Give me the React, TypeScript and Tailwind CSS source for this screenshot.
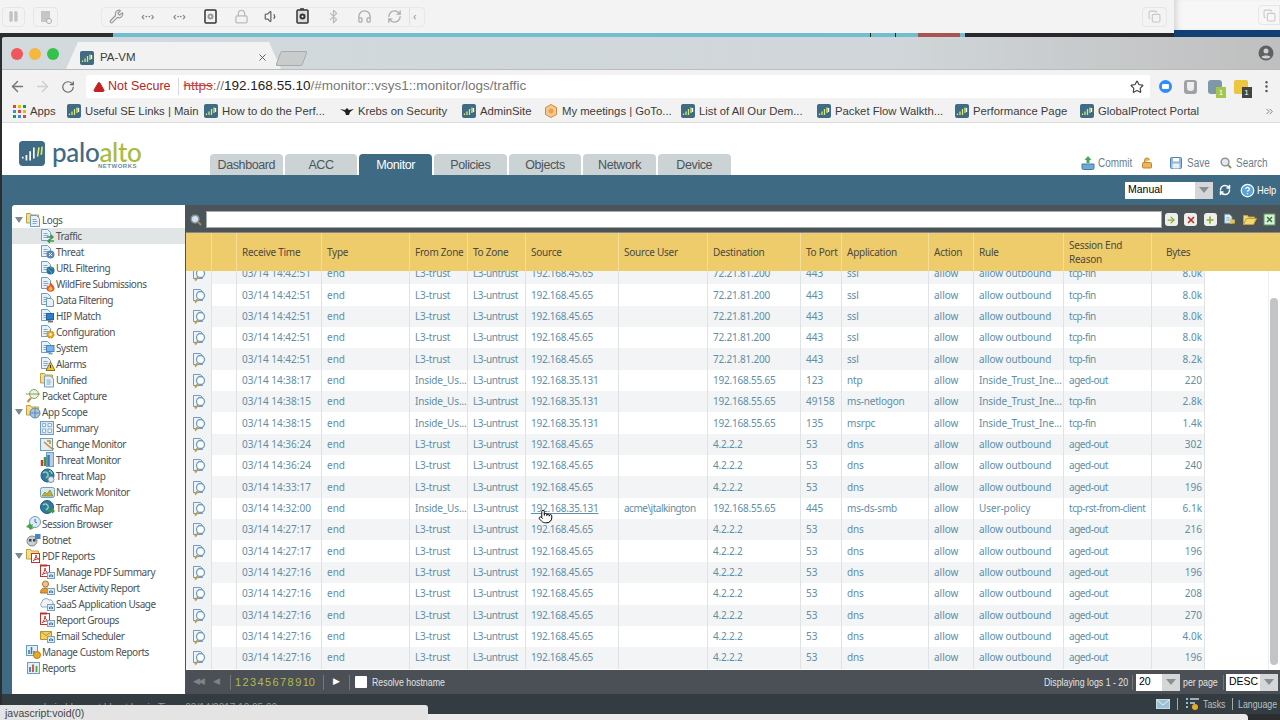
import {
  ArrowLeft,
  ArrowRight,
  RotateCw,
  Star,
  TriangleAlert,
  EllipsisVertical,
  ChevronsRight,
  Wrench,
  Volume1,
  Bluetooth,
  Headphones,
  RefreshCw,
  Lock,
  LockOpen,
  Pause,
  Copy,
  X,
  Plus,
  ArrowRight as GoArrow,
  Pointer,
  CircleHelp,
} from "lucide-react";

const bookmarks = [
  { label: "Useful SE Links | Main", cls: "w-[137px]" },
  { label: "How to do the Perf...", cls: "w-[136px]" },
  { label: "Krebs on Security", cls: "w-[122px]", krebs: true },
  { label: "AdminSite", cls: "w-[82px]" },
  { label: "My meetings | GoTo...", cls: "w-[137px]", meet: true },
  { label: "List of All Our Dem...", cls: "w-[136px]" },
  { label: "Packet Flow Walkth...", cls: "w-[138px]" },
  { label: "Performance Page", cls: "w-[125px]" },
  { label: "GlobalProtect Portal", cls: "w-[150px]" },
];

const tabs = ["Dashboard", "ACC", "Monitor", "Policies", "Objects", "Network", "Device"];

type Node = { label: string; level: 0 | 1; kind: string; open?: boolean; selected?: boolean };

const tree: Node[] = [
  { label: "Logs", level: 0, kind: "folder", open: true },
  { label: "Traffic", level: 1, kind: "traffic", selected: true },
  { label: "Threat", level: 1, kind: "threat" },
  { label: "URL Filtering", level: 1, kind: "url" },
  { label: "WildFire Submissions", level: 1, kind: "fire" },
  { label: "Data Filtering", level: 1, kind: "data" },
  { label: "HIP Match", level: 1, kind: "hip" },
  { label: "Configuration", level: 1, kind: "config" },
  { label: "System", level: 1, kind: "system" },
  { label: "Alarms", level: 1, kind: "alarm" },
  { label: "Unified", level: 1, kind: "unified" },
  { label: "Packet Capture", level: 0, kind: "capture" },
  { label: "App Scope", level: 0, kind: "scope", open: true },
  { label: "Summary", level: 1, kind: "summary" },
  { label: "Change Monitor", level: 1, kind: "change" },
  { label: "Threat Monitor", level: 1, kind: "tmon" },
  { label: "Threat Map", level: 1, kind: "globe" },
  { label: "Network Monitor", level: 1, kind: "net" },
  { label: "Traffic Map", level: 1, kind: "globe2" },
  { label: "Session Browser", level: 0, kind: "session" },
  { label: "Botnet", level: 0, kind: "botnet" },
  { label: "PDF Reports", level: 0, kind: "pdffolder", open: true },
  { label: "Manage PDF Summary", level: 1, kind: "pdf" },
  { label: "User Activity Report", level: 1, kind: "user" },
  { label: "SaaS Application Usage", level: 1, kind: "cloud" },
  { label: "Report Groups", level: 1, kind: "pdf" },
  { label: "Email Scheduler", level: 1, kind: "mail" },
  { label: "Manage Custom Reports", level: 0, kind: "custom" },
  { label: "Reports", level: 0, kind: "reports" },
];

function Page() {
  return (
    <>
      <path d="M1.5 1.5h6l3 3v8h-9z" fill="#e8f1f8" stroke="#6f9dbd" />
      <path d="M3.5 5.5h4M3.5 7.5h5M3.5 9.5h4" stroke="#86aac4" />
    </>
  );
}

function Folder() {
  return <path d="M0.5 3.5v-2h4l1 1.5h7v8h-12z" fill="#f6dc8a" stroke="#c2a03f" />;
}

function MiniChart() {
  return (
    <>
      <rect x="7.5" y="8.5" width="7" height="6" fill="#dbe8f2" stroke="#7ba2bd" />
      <path d="M9.5 13v-2M11 13v-3M12.5 13v-2" stroke="#3b78a8" />
    </>
  );
}

// magnifier with a pale lens, used in the top bar and the filter bar
function Glass({ lens, size }: { lens: string; size: number }) {
  return (
    <svg width={size} height={size} viewBox="0 0 13 13" className="shrink-0">
      <circle cx="5.5" cy="5.5" r="4.2" fill={lens} stroke="#8b9499" strokeWidth="1.6" />
      <path d="M8.5 8.5l3.500 3.500" stroke="#a08a63" strokeWidth="2.2" />
    </svg>
  );
}

function TreeIcon({ kind }: { kind: string }) {
  const inner = () => {
    switch (kind) {
      case "folder":
        return (<><Folder /><g transform="translate(3 2)"><Page /></g></>);
      case "traffic":
        return (<><Page /><path d="M7 9h6M11 7l2 2-2 2M14 13H8M10 11l-2 2 2 2" stroke="#3e9a3e" strokeWidth="1.4" fill="none" /></>);
      case "threat":
        return (<><Page /><circle cx="10.5" cy="10.5" r="4" fill="#5d86b5" /><path d="M9 9l3 3M12 9l-3 3" stroke="#fff" /></>);
      case "url":
        return (<><Page /><circle cx="10.5" cy="10.5" r="4" fill="#2a6fa8" /><path d="M8 9.5c2 0 1 2 3 2 1 0 1 2 0 2.500M10 7c1 1 2 1 3 1" stroke="#5cb35c" fill="none" /></>);
      case "fire":
        return (<><Page /><path d="M10.500 6c1 2 4 3.500 4 6.500a3.800 3 0 0 1-8 0c0-1.500 1-2 1.500-3 .5.500.5 1 1 1 .5-1.500.5-3 1.500-4.500z" fill="#e5572b" /><path d="M10.500 10c.5 1 2 1.500 2 3a2 1.500 0 0 1-4 0c0-1 1.500-1.500 2-3z" fill="#f6c23f" /></>);
      case "data":
        return (<><Page /><g transform="translate(5 5)"><path d="M1.500 1.500h5l2 2v6h-7z" fill="#e8f1f8" stroke="#6f9dbd" /></g></>);
      case "hip":
        return (<><Page /><rect x="6.500" y="5.500" width="7" height="6" fill="#2b7fd0" stroke="#215f9b" /><path d="M8 13.500h5" stroke="#777" strokeWidth="2" /></>);
      case "config":
        return (<><Page /><circle cx="10.500" cy="10.500" r="3.500" fill="#eaaa24" stroke="#b77d12" strokeDasharray="2 1" /><circle cx="10.500" cy="10.500" r="1.200" fill="#fff" /></>);
      case "system":
        return (<><Page /><rect x="6.500" y="5.500" width="7.500" height="6" fill="#73b5ea" stroke="#4a86bb" /><path d="M8.500 13.500h4" stroke="#7aa4c4" strokeWidth="2" /></>);
      case "alarm":
        return (<><Page /><path d="M10.500 6l4.500 8.500H6z" fill="#eec332" stroke="#8c7320" /><path d="M10.500 9v3" stroke="#333" /></>);
      case "unified":
        return (<><Folder /><g transform="translate(3 2.500)"><Page /></g></>);
      case "capture":
        return (<><circle cx="8" cy="6" r="4.500" fill="#eef3df" stroke="#7fa163" /><path d="M0 6h14" stroke="#7fa163" /><path d="M5 10l-3.500 4" stroke="#c2913f" strokeWidth="2" /></>);
      case "scope":
        return (<><Folder /><circle cx="9" cy="9" r="5" fill="#a9c6e1" stroke="#6189ad" /><path d="M4 9h10M9 4v10" stroke="#6189ad" /></>);
      case "summary":
        return (<><rect x="0.500" y="1.500" width="13" height="13" fill="#d7e7f4" stroke="#6f9dbd" /><path d="M2.500 3.500h3v3h-3zM8 3.500h3.500v3H8zM2.500 9h3v3.500h-3zM8 9h3.500v3.500H8z" fill="#f1f7fb" stroke="#8db2cc" /></>);
      case "change":
        return (<><rect x="0.500" y="2.500" width="12" height="12" fill="#e3edf5" stroke="#6f9dbd" /><path d="M4 6l7 6M7 5h3v3M11 12l3 1" stroke="#c98f23" strokeWidth="1.500" fill="none" /></>);
      case "tmon":
        return (<><rect x="6.500" y="0.500" width="7" height="14" fill="#b7cfe3" stroke="#6f9dbd" /><path d="M2 14V8" stroke="#cc3b32" strokeWidth="2.500" /><path d="M5 14V5" stroke="#3b9a48" strokeWidth="2.500" /><path d="M8.500 14V3" stroke="#3e75b4" strokeWidth="2.500" /></>);
      case "globe":
        return (<><circle cx="7.500" cy="7.500" r="6.500" fill="#2f79a8" stroke="#1e5c85" /><path d="M3 5c2-2 4-1 5 1s-1 3-2 4M9 3c2 0 3 2 3 3" stroke="#9ed18a" strokeWidth="1.500" fill="none" /><circle cx="11" cy="11.500" r="3" fill="#dde9f2" stroke="#6d92ad" /></>);
      case "globe2":
        return (<><circle cx="7" cy="7" r="6.500" fill="#2f79a8" stroke="#1e5c85" /><path d="M3 5c2-2 4-1 5 1s-1 3-2 4" stroke="#9ed18a" strokeWidth="1.500" fill="none" /><path d="M8 11h6M12 9l2 2-2 2" stroke="#3e9a3e" strokeWidth="1.500" fill="none" /></>);
      case "net":
        return (<><rect x="0.500" y="3.500" width="14" height="10" rx="2" fill="#dbe8f1" stroke="#6f9dbd" /><path d="M2 12l3-4 2 2 3-4 3 6z" fill="#c9a83c" stroke="#7fa14b" /></>);
      case "session":
        return (<><circle cx="9" cy="6" r="5.500" fill="#dbeaf6" stroke="#6f9dbd" /><path d="M9 3v3l2 1" stroke="#3b6f95" fill="none" /><path d="M0 11l4-4 1 2 2-1-1 3 2 1-4 2-1-2z" fill="#4aa54a" /></>);
      case "botnet":
        return (<><circle cx="6" cy="9" r="5" fill="#c9cfd3" stroke="#7b848a" /><rect x="3" y="7" width="2.500" height="2.500" fill="#444" /><rect x="7" y="7" width="2.500" height="2.500" fill="#444" /><rect x="9" y="2" width="5.500" height="5" fill="#3f87c6" /></>);
      case "pdffolder":
        return (<><Folder /><rect x="5.500" y="5.500" width="8" height="9" fill="#fff" stroke="#b8342c" /><path d="M7 13c2-2 3-4 3-6 0 3 2 4 3 4-2 0-4 0-6 2z" stroke="#c9332b" fill="none" /></>);
      case "pdf":
        return (<><rect x="0.500" y="1.500" width="9" height="11" fill="#fff" stroke="#b8342c" /><path d="M0 1.500h7" stroke="#b8342c" strokeWidth="2" /><path d="M2 11c2-2 3-5 3-7 0 3 2 5 4 5-3 0-5 0-7 2z" stroke="#c9332b" fill="none" /><MiniChart /></>);
      case "user":
        return (<><circle cx="5.500" cy="4" r="3" fill="#f1c38e" stroke="#a9742f" /><path d="M0.500 13c0-4 2-5 5-5s4 1 4 2v3z" fill="#e39b2e" stroke="#a9742f" /><MiniChart /></>);
      case "cloud":
        return (<><path d="M2 11a3 3 0 0 1 0-5 4 4 0 0 1 7-2 3 3 0 0 1 4 3v2H8v2z" fill="#edf3f8" stroke="#8fa9bd" /><MiniChart /></>);
      case "mail":
        return (<><path d="M0.500 3.500h11v8h-11z" fill="#f3ce5f" stroke="#b8942e" /><path d="M0.500 3.500l5.500 4 5.500-4" stroke="#b8942e" fill="none" /><MiniChart /></>);
      case "custom":
        return (<><rect x="0.500" y="1.500" width="11" height="10" fill="#e3edf5" stroke="#6f9dbd" /><path d="M3 10V6M5.500 10V3M8 10V7" stroke="#3b78a8" strokeWidth="1.500" /><circle cx="11" cy="11" r="3.500" fill="#eaaa24" stroke="#b77d12" /></>);
      case "reports":
        return (<><rect x="1.500" y="2.500" width="12" height="11" fill="#e3edf5" stroke="#6f9dbd" /><path d="M4 12V7" stroke="#3b78a8" strokeWidth="1.700" /><path d="M7 12V4.500" stroke="#c9423a" strokeWidth="1.700" /><path d="M10.500 12V6" stroke="#4aa54a" strokeWidth="1.700" /></>);
      default:
        return <Page />;
    }
  };
  return (
    <svg width="15" height="16" viewBox="0 0 15 16" className="shrink-0">
      {inner()}
    </svg>
  );
}

function Sidebar() {
  return (
    <div className="w-[173px] shrink-0 bg-white pt-[7px] rounded-tl-[3px] overflow-hidden">
      {tree.map((n) => (
        <div
          key={n.label + n.kind}
          className={
            "h-4 flex items-center text-[10px] tracking-[-0.45px] text-[#4b5257] " +
            (n.selected ? "bg-[#e2e5e6] " : "") +
            (n.level === 0 ? "pl-[3px]" : "pl-[17px]")
          }
        >
          <span className="w-[11px] shrink-0 flex">
            {n.open && <span className="w-0 h-0 border-x-[4px] border-x-transparent border-t-[6px] border-t-[#7c8a92]" />}
          </span>
          <TreeIcon kind={n.kind} />
          <span className="ml-[1px] whitespace-nowrap">{n.label}</span>
        </div>
      ))}
    </div>
  );
}

function RowIcon() {
  return (
    <svg width="15" height="16" viewBox="0 0 15 16">
      <path d="M1.500 1.500h7l2 2v9h-9z" fill="#eef4f9" stroke="#6f9dbd" />
      <circle cx="8.500" cy="7.500" r="4" fill="#fff" stroke="#6f9dbd" strokeWidth="1.300" />
      <path d="M6 11l-3 3.500" stroke="#c8994a" strokeWidth="2" />
    </svg>
  );
}

type Log = {
  time: string;
  from: string;
  src: string;
  user?: string;
  dst: string;
  port: string;
  app: string;
  rule: string;
  end: string;
  bytes: string;
  link?: boolean;
};

const web = (bytes: string): Log => ({
  time: "03/14 14:42:51",
  from: "L3-trust",
  src: "192.168.45.65",
  dst: "72.21.81.200",
  port: "443",
  app: "ssl",
  rule: "allow outbound",
  end: "tcp-fin",
  bytes,
});
const inside = (time: string, port: string, app: string, end: string, bytes: string): Log => ({
  time,
  from: "Inside_Us...",
  src: "192.168.35.131",
  dst: "192.168.55.65",
  port,
  app,
  rule: "Inside_Trust_Ine...",
  end,
  bytes,
});
const dns = (time: string, bytes: string): Log => ({
  time,
  from: "L3-trust",
  src: "192.168.45.65",
  dst: "4.2.2.2",
  port: "53",
  app: "dns",
  rule: "allow outbound",
  end: "aged-out",
  bytes,
});

const logs: Log[] = [
  web("8.0k"),
  web("8.0k"),
  web("8.0k"),
  web("8.0k"),
  web("8.2k"),
  inside("03/14 14:38:17", "123", "ntp", "aged-out", "220"),
  inside("03/14 14:38:15", "49158", "ms-netlogon", "tcp-fin", "2.8k"),
  inside("03/14 14:38:15", "135", "msrpc", "tcp-fin", "1.4k"),
  dns("03/14 14:36:24", "302"),
  dns("03/14 14:36:24", "240"),
  dns("03/14 14:33:17", "196"),
  {
    ...inside("03/14 14:32:00", "445", "ms-ds-smb", "tcp-rst-from-client", "6.1k"),
    user: "acme\\jtalkington",
    rule: "User-policy",
    link: true,
  },
  dns("03/14 14:27:17", "216"),
  dns("03/14 14:27:17", "196"),
  dns("03/14 14:27:16", "196"),
  dns("03/14 14:27:16", "208"),
  dns("03/14 14:27:16", "270"),
  dns("03/14 14:27:16", "4.0k"),
  dns("03/14 14:27:16", "196"),
];

const headers = [
  "",
  "",
  "Receive Time",
  "Type",
  "From Zone",
  "To Zone",
  "Source",
  "Source User",
  "Destination",
  "To Port",
  "Application",
  "Action",
  "Rule",
  "Session End Reason",
  "Bytes",
];

function Cell({ children, cls = "" }: { children?: React.ReactNode; cls?: string }) {
  return (
    <div className={"border-r border-[#dfe3e5] pl-[5px] pr-[2px] flex items-center whitespace-nowrap overflow-hidden " + cls}>
      {children}
    </div>
  );
}

function LogTable() {
  return (
    <div className="flex-1 min-h-0 relative bg-white overflow-hidden">
      <div className="mt-[-8px]">
        {logs.map((l, i) => (
          <div
            key={i}
            className={
              "grid grid-cols-[26px_25px_85px_88px_58px_58px_93px_89px_93px_41px_87px_45px_90px_88px_53px] w-[1019px] h-[21.35px] text-[10px] text-[#5f8ea6] " +
              (i % 2 === 0 ? "bg-[#f2f4f5]" : "bg-white")
            }
          >
            <div className="bg-[#f1f3f4] border-r border-[#dfe3e5] flex items-center pl-[6px] pt-[1px]">
              <RowIcon />
            </div>
            <Cell />
            <Cell>{l.time}</Cell>
            <Cell>end</Cell>
            <Cell cls="tracking-[-0.15px]">{l.from}</Cell>
            <Cell cls="tracking-[-0.4px]">L3-untrust</Cell>
            <Cell cls="tracking-[-0.25px]">{l.link ? <span className="underline">{l.src}</span> : l.src}</Cell>
            <Cell cls="tracking-[-0.5px]">{l.user}</Cell>
            <Cell cls="tracking-[-0.2px]">{l.dst}</Cell>
            <Cell>{l.port}</Cell>
            <Cell cls="tracking-[-0.2px]">{l.app}</Cell>
            <Cell>allow</Cell>
            <Cell cls="tracking-[-0.1px]">{l.rule}</Cell>
            <Cell cls="tracking-[-0.45px]">{l.end}</Cell>
            <Cell cls="justify-end">{l.bytes}</Cell>
          </div>
        ))}
      </div>
      {/* scrollbar */}
      <div className="absolute top-0 bottom-0 right-[11px] w-px bg-[#eceeef]" />
      <div className="absolute top-[27px] bottom-[5px] right-[2px] w-[8px] rounded-full bg-[#c2c4c5]" />
      <Pointer size={15} className="absolute left-[352px] top-[238px] text-black fill-white" strokeWidth={1.5} />
    </div>
  );
}

function Favicon() {
  return (
    <svg width="14" height="14" viewBox="0 0 14 14" className="shrink-0">
      <rect width="14" height="14" rx="2" fill="#3f6b85" />
      <path d="M2.500 11V9.500M5 11V7.500M7.500 11V5M10 9V3.500" stroke="#d9e86a" strokeWidth="1.300" />
      <path d="M11.500 8V4" stroke="#fff" strokeWidth="1.300" />
    </svg>
  );
}

function DiskIcon({ dark }: { dark?: boolean }) {
  return (
    <svg width="15" height="17" viewBox="0 0 15 17" className="shrink-0">
      <rect x="2" y="2" width="11" height="13" rx="1" fill={dark ? "#dcdcdc" : "#f2f2f2"} stroke="#333" strokeWidth="1.500" />
      <circle cx="7.500" cy="8.500" r="3" fill={dark ? "#333" : "#999"} />
      <circle cx="7.500" cy="8.500" r="1" fill="#fff" />
      {dark && <path d="M5 1h4" stroke="#333" strokeWidth="1.500" />}
    </svg>
  );
}

function VmBar() {
  return (
    <div className="h-[33px] flex">
      <div className="w-[1174px] bg-[#f3f3f3] flex items-center pl-[2px] pr-[7px]">
        <div className="w-[23px] h-5 border border-[#e6e6e6] rounded flex items-center justify-center">
          <Pause size={13} className="text-[#c4c4c4] fill-[#c4c4c4]" strokeWidth={1} />
        </div>
        <div className="ml-[8px] w-[25px] h-5 border border-[#e6e6e6] rounded flex items-center justify-center">
          <svg width="12" height="14" viewBox="0 0 12 14"><rect x="1" y="1" width="9" height="11" fill="#c6c6c6" /><circle cx="9" cy="11" r="2.500" fill="#f3f3f3" stroke="#aaa" /></svg>
        </div>
        <div className="ml-[43px] w-[324px] h-5 border border-[#e8e8e8] rounded flex items-center gap-[15.7px] pl-[7px] text-[11px] text-[#666]">
          <Wrench size={15} className="text-[#999] shrink-0" />
          <span className="w-4 text-center">‹··›</span>
          <span className="w-4 text-center">‹··›</span>
          <DiskIcon />
          <Lock size={15} className="text-[#bbb] shrink-0" />
          <Volume1 size={15} className="text-[#666] shrink-0" />
          <DiskIcon dark />
          <Bluetooth size={15} className="text-[#bbb] shrink-0" />
          <Headphones size={15} className="text-[#aaa] shrink-0" />
          <RefreshCw size={15} className="text-[#aaa] shrink-0" />
          <span className="text-[#999] border-l border-[#e0e0e0] pl-[3px] -ml-[9px]">‹</span>
        </div>
        <div className="ml-auto w-[25px] h-5 border border-[#e6e6e6] rounded flex items-center justify-center">
          <Copy size={13} className="text-[#c8c8c8]" />
        </div>
      </div>
      <div className="flex-1 bg-[#f7f7f7] border-b-[3px] border-[#123f74] flex items-start justify-end pt-[5px] shadow-[inset_6px_0_6px_-4px_#cfcfcf]">
        <div className="w-[22px] h-5 border border-[#e6e6e6] rounded-l flex items-center justify-center">
          <Copy size={13} className="text-[#c8c8c8]" />
        </div>
      </div>
    </div>
  );
}

function Stripe() {
  return (
    <div className="h-[4px] flex">
      <div className="w-[113px] bg-[#2b2d2f]" />
      <div className="w-[757px] bg-[#73bdd0]" />
      <div className="w-px bg-[#222]" />
      <div className="w-[24px] bg-[#73bdd0]" />
      <div className="w-px bg-[#222]" />
      <div className="w-[22px] bg-[#73bdd0]" />
      <div className="w-[42px] bg-[#a95450]" />
      <div className="w-[5px] bg-[#73bdd0]" />
      <div className="w-[209px] bg-[#29292b]" />
      <div className="flex-1 bg-[#123f74]" />
    </div>
  );
}

function Chrome() {
  return (
    <div className="font-['Liberation_Sans',sans-serif] text-[#3c3c3c]">
      <div className="h-[33px] bg-gradient-to-r from-[#d2dadd] via-[#d0d6d9] via-[70%] to-[#bfbfbf] flex items-end pl-[66px] border-b border-[#b9bcbe] rounded-tl-[5px] relative">
        <div className="absolute left-[11px] top-[11px] flex gap-[6px]">
          <span className="w-[12px] h-[12px] rounded-full bg-[#f0565a]" />
          <span className="w-[12px] h-[12px] rounded-full bg-[#f5b73e]" />
          <span className="w-[12px] h-[12px] rounded-full bg-[#35c24a]" />
        </div>
        <div className="w-[215px] h-[27px] bg-[#f2f2f2] [clip-path:polygon(0_100%,12px_0,calc(100%-12px)_0,100%_100%)] flex items-center pl-[14px] pr-[13px] pt-[4px] text-[11.5px]">
          <Favicon />
          <span className="ml-[6px]">PA-VM</span>
          <X size={11} className="ml-auto text-[#555]" />
        </div>
        <div className="ml-[-3px] mb-[3px] w-[27px] h-[15px] bg-[#c9cccd] border border-[#aaa] -skew-x-[20deg] rounded-[2px]" />
        <svg width="18" height="18" viewBox="0 0 18 18" className="ml-auto mr-[5px] mb-[7px]">
          <circle cx="9" cy="9" r="7.500" fill="#5e6163" />
          <circle cx="9" cy="7" r="2.500" fill="#d0d0d0" />
          <path d="M4.500 13c1-2 8-2 9 0-2 2-7 2-9 0z" fill="#d0d0d0" />
        </svg>
      </div>
      <div className="h-[28px] bg-[#f2f2f2] flex items-center pl-[9px] pr-[7px] pt-[5px]">
        <ArrowLeft size={17} className="text-[#757575]" />
        <ArrowRight size={17} className="text-[#cfcfcf] ml-[8px]" />
        <RotateCw size={14} className="text-[#666] ml-[10px]" />
        <div className="ml-[11px] w-[1064px] h-[23px] bg-white rounded-[2px] flex items-center pl-[7px] pr-[6px] text-[13.5px]">
          <TriangleAlert size={12} className="text-[#c5221f] fill-[#c5221f] stroke-[#c5221f]" />
          <span className="ml-[3px] text-[12.5px] text-[#b3261e]">Not Secure</span>
          <span className="ml-[7px] mr-[5px] w-px h-[17px] bg-[#d8d8d8]" />
          <span className="text-[#c5413b] line-through">https</span>
          <span className="text-[#777]">://</span>
          <span className="text-[#222]">192.168.55.10</span>
          <span className="text-[#777]">/#monitor::vsys1::monitor/logs/traffic</span>
          <Star size={14} className="ml-auto text-[#444]" />
        </div>
        <div className="ml-[9px] flex-1 flex items-center justify-between">
          <span className="w-[13px] h-[13px] rounded-full bg-[#2d8cff] flex items-center justify-center">
            <span className="w-[7px] h-[5px] rounded-[1px] bg-white" />
          </span>
          <span className="w-[13px] h-[14px] rounded-[3px] bg-[#9ea3a5] flex items-center justify-center">
            <span className="w-[7px] h-[9px] rounded-b-[4px] bg-[#eeeeee]" />
          </span>
          <span className="relative w-[14px] h-[14px] rounded-[3px] bg-[#7f98a7]">
            <span className="absolute right-[-4px] bottom-[-4px] w-[10px] h-[11px] bg-[#a4c64a] text-white text-[8px] leading-[11px] text-center">1</span>
          </span>
          <span className="relative w-[14px] h-[14px] rounded-[2px] bg-[#ecc73e]">
            <span className="absolute right-[-4px] bottom-[-4px] w-[10px] h-[11px] bg-[#444] text-white text-[8px] leading-[11px] text-center">1</span>
          </span>
          <EllipsisVertical size={15} className="text-[#555] -mr-[1px]" />
        </div>
      </div>
      <div className="h-[25px] bg-[#f2f2f2] border-b border-[#dcdcdc] flex items-center pl-[13px] pr-[5px] pt-[2px] text-[11.3px]">
        <svg width="13" height="13" viewBox="0 0 13 13" className="shrink-0">
          <rect x="0" y="0" width="3" height="3" fill="#dc4437" />
          <rect x="5" y="0" width="3" height="3" fill="#f4b400" />
          <rect x="10" y="0" width="3" height="3" fill="#0f9d58" />
          <rect x="0" y="5" width="3" height="3" fill="#4285f4" />
          <rect x="5" y="5" width="3" height="3" fill="#dc4437" />
          <rect x="10" y="5" width="3" height="3" fill="#f4b400" />
          <rect x="0" y="10" width="3" height="3" fill="#0f9d58" />
          <rect x="5" y="10" width="3" height="3" fill="#4285f4" />
          <rect x="10" y="10" width="3" height="3" fill="#dc4437" />
        </svg>
        <span className="ml-[4px] w-[37px]">Apps</span>
        {bookmarks.map((b) => (
          <div key={b.label} className={b.cls + " flex items-center gap-[4px] whitespace-nowrap"}>
            {b.krebs ? (
              <svg width="14" height="10" viewBox="0 0 14 10" className="shrink-0">
                <path d="M0 3l5 1 2-2 2 2 5-1-4 3-1 3H6L5 6z" fill="#222" />
              </svg>
            ) : b.meet ? (
              <svg width="14" height="14" viewBox="0 0 14 14" className="shrink-0">
                <path d="M7 .5l5.500 3v7L7 13.500l-5.500-3v-7z" fill="#f3c98f" stroke="#cf8b3e" />
                <circle cx="7" cy="7" r="2.500" fill="#e8a24a" />
              </svg>
            ) : (
              <Favicon />
            )}
            <span>{b.label}</span>
          </div>
        ))}
        <ChevronsRight size={11} className="ml-auto text-[#777]" />
      </div>
    </div>
  );
}

function Logo() {
  return (
    <div className="w-[191px] shrink-0 self-start mt-[18px] flex items-start relative">
      <svg width="26" height="25" viewBox="0 0 28 27" className="shrink-0">
        <rect width="28" height="27" rx="4" fill="#3f6b85" />
        <path d="M4 19v-2M8 21v-6M12 21V11M16 19V7" stroke="#fff" strokeWidth="1.800" />
        <path d="M20 17l1.500-10M24 15l1-9" stroke="#d9e86a" strokeWidth="1.800" />
      </svg>
      <span className="ml-[7px] text-[26px] leading-[22px] tracking-[-0.3px] font-medium font-['Lato','Liberation_Sans',sans-serif]">
        <span className="text-[#3f6b85]">palo</span>
        <span className="text-[#a9bb3c]">alto</span>
      </span>
      <span className="absolute left-[79px] top-[22px] text-[6px] leading-[7px] font-bold tracking-[0.5px] text-[#6d8a9b] font-['Liberation_Sans',sans-serif]">
        NETWORKS
      </span>
    </div>
  );
}

function Header() {
  const scaled = "inline-block whitespace-nowrap scale-x-[0.83] origin-left";
  return (
    <div className="h-[52px] bg-white flex items-end pl-[19px] pr-[13px] font-['Liberation_Sans',sans-serif]">
      <Logo />
      <div className="flex gap-[2px]">
        {tabs.map((t) => (
          <div
            key={t}
            className={
              "w-[72.67px] h-[21px] pt-[2px] rounded-t-[4px] flex items-center justify-center text-[12.5px] tracking-[-0.4px] " +
              (t === "Monitor" ? "bg-[#3e6a83] text-white" : "bg-[#cbd3d5] text-[#4c5559]")
            }
          >
            {t}
          </div>
        ))}
      </div>
      <div className="ml-auto mb-[3px] flex items-center text-[12px] text-[#6a7f8c]">
        <svg width="14" height="14" viewBox="0 0 14 14" className="shrink-0">
          <path d="M7 0l3.500 4H8.500v3h-3V4H3.500z" fill="#4aa65a" />
          <path d="M1 8h12v4a1.500 1.500 0 0 1-1.500 1.500h-9A1.500 1.500 0 0 1 1 12z" fill="#6fa9cf" stroke="#3f7ba3" />
        </svg>
        <span className={"ml-[3px] w-[35px] " + scaled}>Commit</span>
        <LockOpen size={12} className="ml-[8px] shrink-0 text-[#c9832a] fill-[#eab65a]" />
        <svg width="12" height="12" viewBox="0 0 12 12" className="ml-[17px] shrink-0">
          <rect x="0.500" y="0.500" width="11" height="11" rx="1" fill="#8db8d8" stroke="#4f86b4" />
          <rect x="3" y="1" width="6" height="3.500" fill="#fff" />
          <rect x="2.500" y="6.500" width="7" height="5" fill="#e8f0f6" />
        </svg>
        <span className={"ml-[5px] w-[21px] " + scaled}>Save</span>
        <span className="ml-[12px] shrink-0">
          <Glass lens="#e6e9eb" size={12} />
        </span>
        <span className={"ml-[4px] w-[31px] " + scaled}>Search</span>
      </div>
    </div>
  );
}

function SelectBox({ text, cls }: { text: string; cls: string }) {
  return (
    <div className={cls + " h-[17px] shrink-0 flex bg-white text-black text-[10.5px]"}>
      <span className="flex-1 pl-[3px] flex items-center">{text}</span>
      <span className="w-[18px] bg-[#d4d6d7] flex items-center justify-center">
        <span className="w-0 h-0 border-x-[5px] border-x-transparent border-t-[6px] border-t-[#8b8f92]" />
      </span>
    </div>
  );
}

function Toolbar() {
  return (
    <div className="h-[30px] bg-[#3e6a83] flex items-center justify-end pr-[5px] font-['Liberation_Sans',sans-serif]">
      <SelectBox text="Manual" cls="w-[88px]" />
      <RefreshCw size={12} className="ml-[6px] text-white" strokeWidth={3} />
      <CircleHelp size={15} className="ml-[9px] text-white fill-[#5aa4d6]" />
      <span className="ml-[2px] w-[18px] text-white text-[11px] scale-x-[0.85] origin-left">Help</span>
    </div>
  );
}

function FilterBar() {
  const btn = "w-[13px] h-[13px] rounded-[3px] bg-[#eeeeee] flex items-center justify-center";
  return (
    <div className="h-[28px] bg-[#4a5459] flex items-center pl-[4px] pr-[4px] pt-[2px] border-b border-[#888]">
      <Glass lens="#cfe2ef" size={12} />
      <div className="ml-[4px] w-[956px] h-[17px] bg-white border border-[#aaa]" />
      <div className="ml-auto flex items-center gap-[6.5px]">
        <span className={btn}><GoArrow size={10} className="text-[#8eaa2d]" strokeWidth={3} /></span>
        <span className={btn}><X size={10} className="text-[#b5342a]" strokeWidth={4} /></span>
        <span className={btn}><Plus size={10} className="text-[#8eaa2d]" strokeWidth={4} /></span>
        <svg width="13" height="13" viewBox="0 0 15 16"><Page /><path d="M8 8h6v5H8z" fill="#e3c45b" /></svg>
        <svg width="14" height="13" viewBox="0 0 14 13"><path d="M0.500 11.500v-9h4l1 1.500h6v2" fill="#f3d76f" stroke="#c2a03f" /><path d="M0.500 11.500l3-6h10l-3 6z" fill="#f3d76f" stroke="#c2a03f" /></svg>
        <svg width="13" height="13" viewBox="0 0 13 13"><rect x="1" y="1" width="11" height="11" fill="#dcefd8" stroke="#5b9b62" /><path d="M4 4l5 5M9 4l-5 5" stroke="#2c7a3a" strokeWidth="1.500" /></svg>
      </div>
    </div>
  );
}

function TableHeader() {
  return (
    <div className="grid grid-cols-[26px_25px_85px_88px_58px_58px_93px_89px_93px_41px_87px_45px_90px_88px_1fr] h-[38px] w-full bg-[#eecb6b] text-[10px] tracking-[-0.25px] text-[#4b4a3e]">
      {headers.map((h, i) => (
        <div
          key={i}
          className={
            "border-r border-[#f6dd98] flex items-center leading-[14px] " +
            (i === 13 ? "pl-[5px] pr-[2px]" : i === 14 ? "border-r-0 pl-[14px]" : "pl-[5px] whitespace-nowrap")
          }
        >
          {h}
        </div>
      ))}
    </div>
  );
}

function Sep({ cls = "" }: { cls?: string }) {
  return <span className={"w-px h-[15px] shrink-0 bg-[#777] " + cls} />;
}

function Pager() {
  const squeezed = "whitespace-nowrap scale-x-[0.8] origin-left";
  return (
    <div className="h-[24px] bg-[#4a5055] flex items-center pl-[7px] pr-[2px] text-[11px] font-['Liberation_Sans',sans-serif] text-[#e4e4e4]">
      <span className="text-[#7d8387] text-[9px] tracking-[-2px] w-[20px]">◀◀</span>
      <span className="text-[#7d8387] text-[9px] w-[17px]">◀</span>
      <Sep />
      <span className="ml-[4px] w-[88px] flex gap-[1.4px] text-[11px] text-[#b3bb4e]">
        {"1 2 3 4 5 6 7 8 9 10".split(" ").map((p) => (
          <span key={p}>{p}</span>
        ))}
      </span>
      <Sep />
      <span className="text-white text-[9px] ml-[9px] w-[16px]">▶</span>
      <Sep />
      <span className="ml-[5px] w-[12px] h-[12px] bg-white rounded-[1px]" />
      <span className="ml-[5px] whitespace-nowrap scale-x-[0.8] origin-left">Resolve hostname</span>
      <span className={"ml-auto w-[82px] " + squeezed}>Displaying logs 1 - 20</span>
      <Sep cls="ml-[6px] mr-[3px]" />
      <SelectBox text="20" cls="w-[44px]" />
      <span className={"ml-[3px] w-[34px] " + squeezed}>per page</span>
      <Sep cls="ml-[6px] mr-[2px]" />
      <SelectBox text="DESC" cls="w-[52px]" />
    </div>
  );
}

function StatusBar() {
  const squeezed = "whitespace-nowrap scale-x-[0.8] origin-left";
  return (
    <div className="h-[20px] bg-[#333c41] flex pl-[35px] pr-[3px] text-[11px] font-['Liberation_Sans',sans-serif] text-[#b9c0c4]">
      <span className="text-[10px] pt-[6px] text-[#8f979c]">admin | Logout | Last Login Time: 03/14/2017 10:05:00</span>
      <div className="ml-auto flex items-center">
        <svg width="14" height="10" viewBox="0 0 14 10" className="shrink-0">
          <rect x="0.500" y="0.500" width="13" height="9" fill="#9cc0d4" stroke="#c5dbe6" />
          <path d="M1 1l6 5 6-5" stroke="#e6f0f5" fill="none" />
        </svg>
        <span className="ml-[7px] w-px h-[12px] bg-[#aaa]" />
        <svg width="14" height="14" viewBox="0 0 14 14" className="ml-[8px] shrink-0">
          <path d="M0 2h2M0 6h2M0 10h2" stroke="#8fc0d8" strokeWidth="2" />
          <path d="M4 2h9M4 6h5" stroke="#c9d3d8" strokeWidth="1.500" />
          <circle cx="9" cy="10" r="3" fill="#e6a92a" />
        </svg>
        <span className={"ml-[3px] w-[22px] " + squeezed}>Tasks</span>
        <span className="ml-[7px] w-px h-[12px] bg-[#aaa]" />
        <span className={"ml-[5px] w-[39px] " + squeezed}>Language</span>
      </div>
    </div>
  );
}

export default function App() {
  return (
    <div className="w-[1280px] h-[720px] overflow-hidden relative flex flex-col bg-[#2b2d2f] font-['Noto_Sans',sans-serif]">
      <VmBar />
      <Stripe />
      <div className="flex-1 min-h-0 flex flex-col">
        <Chrome />
        <Header />
        <Toolbar />
        <div className="h-[489px] flex bg-[#3e6a83]">
          <div className="w-[12px] shrink-0" />
          <Sidebar />
          <div className="flex-1 min-w-0 flex flex-col border-l border-[#4a5459]">
            <FilterBar />
            <TableHeader />
            <LogTable />
            <Pager />
          </div>
        </div>
        <StatusBar />
        <div className="h-[6px] flex">
          <div className="w-[1248px] bg-[#ebebeb] rounded-tr-[4px]" />
        </div>
      </div>
      {/* window edge over the page */}
      <div className="absolute left-0 top-[37px] bottom-0 w-[2px] bg-[#2b2d2f]" />
      <div className="absolute left-0 bottom-0 w-[428px] h-[15px] bg-[#e4e4e4] rounded-tr-[3px] text-[10.5px] leading-[15px] pl-[5px] pt-[1px] text-[#444] font-['Liberation_Sans',sans-serif]">
        javascript:void(0)
      </div>
    </div>
  );
}
